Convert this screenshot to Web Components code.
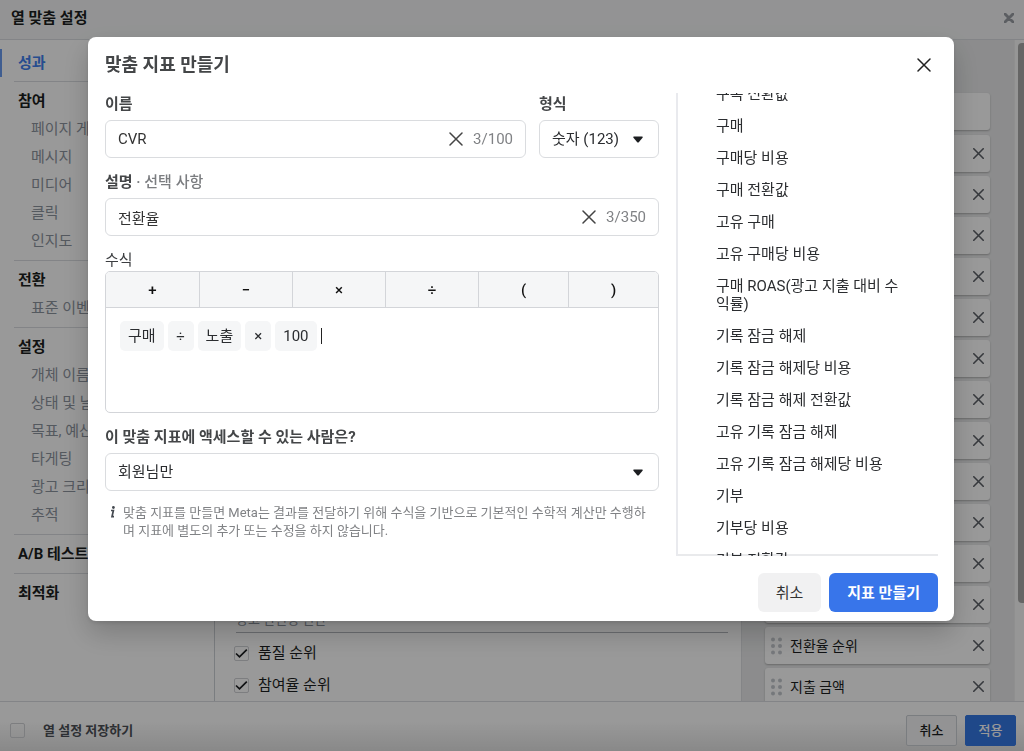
<!DOCTYPE html>
<html lang="ko">
<head>
<meta charset="utf-8">
<meta name="viewport" content="width=device-width, initial-scale=1">
<title>열 맞춤 설정</title>
<style>
  html, body { height: 100%; margin: 0; }
  body { font: 15px/22px Roboto, "Noto Sans CJK KR", sans-serif; color: #1c1e21; background: #fff; overflow: hidden; }
</style>
</head>
<body>
<column-page></column-page>
<modal-layer><metric-dialog></metric-dialog></modal-layer>

<script>
const BASE = `<style>
  *, *::before, *::after { box-sizing: border-box; }
  button, input, select { font: inherit; color: inherit; margin: 0; padding: 0; border: 0; background: none; border-radius: 0; outline: 0; }
  ul { list-style: none; margin: 0; padding: 0; }
  :host { box-sizing: border-box; display: block; }
</style>`;

function define(tag, markup, ready) {
  const template = document.createElement("template");
  customElements.define(tag, class extends HTMLElement {
    connectedCallback() {
      if (this.shadowRoot) return;
      template.innerHTML = BASE + (typeof markup === "function" ? markup(this) : markup);
      this.attachShadow({ mode: "open" }).append(template.content.cloneNode(true));
      if (ready) ready(this, this.shadowRoot);
    }
  });
}

/* Cross icon: size and stroke are set with attributes */
define("cross-icon", el => {
  const size = el.getAttribute("size") || 14, w = el.getAttribute("stroke") || 1.5;
  return `<style>:host { display: inline-block; } svg { display: block; }</style>
  <svg width="${size}" height="${size}" viewBox="0 0 14 14" aria-hidden="true"><path d="M1 1 13 13M13 1 1 13" fill="none" stroke="currentColor" stroke-width="${w}" stroke-linecap="round"/></svg>`;
});

define("check-field", el => `<style>
  label { display: flex; align-items: center; gap: var(--gap, 9px); }
  .box { display: grid; flex: none; width: 15px; height: 15px; }
  .box > * { grid-area: 1 / 1; }
  input { appearance: none; width: 15px; height: 15px; border: 1px solid #d0d2d6; border-radius: 2px; }
  svg { display: none; pointer-events: none; }
  input:checked + svg { display: block; }
</style>
<label><span class="box"><input type="checkbox" ${el.hasAttribute("checked") ? "checked" : ""}>
<svg width="15" height="15" viewBox="0 0 15 15"><path d="M2 7.5 5.5 10.8 12.8 3.6" fill="none" stroke="#1c1e21" stroke-width="1.7"/></svg></span>
<span><slot></slot></span></label>`);

define("nav-section", `<style>
  :host { margin-left: 14px; padding: 5px 0 5px 4px; border-top: 1px solid #dadde1; line-height: 28px; white-space: nowrap; }
  h3 { margin: 0; font-size: 15px; font-weight: 700; }
  ul { padding-left: 13px; color: #8d949e; }
</style><h3><slot name="title"></slot></h3><ul><slot></slot></ul>`);

define("side-nav", `<style>
  :host { width: 215px; flex: none; border-right: 1px solid #ccd0d5; overflow: hidden; }
  .active { display: block; margin: 9px 0 4px; padding-left: 16px; border-left: 2px solid #6a9bf0; line-height: 28px; font-weight: 700; color: #4080ee; text-decoration: none; }
  li { list-style: none; }
</style>
<nav><a class="active" href="#performance">성과</a>
<nav-section><span slot="title">참여</span><li>페이지 게시물</li><li>메시지</li><li>미디어</li><li>클릭</li><li>인지도</li></nav-section>
<nav-section><span slot="title">전환</span><li>표준 이벤트</li></nav-section>
<nav-section><span slot="title">설정</span><li>개체 이름 및 ID</li><li>상태 및 날짜</li><li>목표, 예산 및 일정</li><li>타게팅</li><li>광고 크리에이티브</li><li>추적</li></nav-section>
<nav-section><span slot="title">A/B 테스트</span></nav-section>
<nav-section><span slot="title">최적화</span></nav-section></nav>`);

define("metric-options", `<style>
  :host { flex: 1; display: flex; flex-direction: column; justify-content: flex-end; padding: 0 13px 0 19px; overflow: hidden; }
  h4 { margin: 0 0 4px 2px; padding-bottom: 1px; border-bottom: 1px solid #b4b7bc; font: inherit; font-size: 13px; color: #8d949e; }
  check-field { line-height: 32px; }
</style><h4>광고 관련성 진단</h4><check-field checked>품질 순위</check-field><check-field checked>참여율 순위</check-field>`);

define("column-card", el => `<style>
  :host { display: flex; align-items: center; gap: 8px; flex: none; height: 37px; padding: 0 6px; border-radius: 3px; background: #fff; box-shadow: 0 1px 2px rgba(0,0,0,.25); font-size: 14px; color: #1c1e21; }
  .grip { display: block; fill: #c4c8ce; }
  span { flex: 1; }
  button { width: 11px; height: 11px; color: #5b5f66; }
  cross-icon { display: block; }
</style>
${el.hasAttribute("pinned") ? "" : `<svg class="grip" width="11" height="18" viewBox="0 0 11 18"><circle cx="2" cy="2.5" r="2"/><circle cx="9" cy="2.5" r="2"/><circle cx="2" cy="9" r="2"/><circle cx="9" cy="9" r="2"/><circle cx="2" cy="15.5" r="2"/><circle cx="9" cy="15.5" r="2"/></svg>`}
<span><slot></slot></span>
${el.hasAttribute("pinned") ? "" : `<button type="button" aria-label="삭제"><cross-icon size="11" stroke="2"></cross-icon></button>`}`);

define("column-list", `<style>
  :host { display: flex; width: 283px; flex: none; background: #e9eaeb; border-left: 1px solid #dcdee1; overflow: hidden; }
  .cards { flex: 1; display: flex; flex-direction: column; gap: 4px; padding: 53px 24px 0 23px; overflow: hidden; }
  [pinned] { margin-bottom: 1px; }
  .track { width: 10px; padding: 3px 0 0 3px; background: #fafafa; border-left: 1px solid #eee; }
  .thumb { height: 560px; border-radius: 4px 0 0 4px; background: #a9a9a9; }
</style>
<div class="cards"><column-card pinned></column-card>${"<column-card></column-card>".repeat(12)}<column-card>전환율 순위</column-card><column-card>지출 금액</column-card></div>
<div class="track"><div class="thumb"></div></div>`);

define("column-page", `<style>
  :host { height: 100vh; display: flex; flex-direction: column; }
  header { flex: none; display: flex; align-items: center; justify-content: space-between; height: 40px; padding: 0 10px 3px 11px; background: #f5f6f7; border-bottom: 1px solid #dadde1; }
  h1 { margin: 0; font-size: 15px; font-weight: 700; }
  header button { width: 10px; height: 10px; color: #999da4; }
  header cross-icon { display: block; }
  main { flex: 1; min-height: 0; display: flex; }
  footer { flex: none; display: flex; align-items: center; gap: 8px; height: 50px; padding: 8px 8px 0 10px; border-top: 1px solid #dadde1; background: linear-gradient(#fff 40%, #e4e4e4); font-size: 13px; }
  footer check-field { --gap: 18px; flex: 1; font-weight: 700; color: #4b4f56; }
  footer button { width: 51px; height: 31px; border-radius: 2px; border: 1px solid #ccd0d5; background: #f5f6f7; font-weight: 500; }
  footer .primary { border-color: #3578e5; background: #3578e5; color: #fff; }
</style>
<header><h1>열 맞춤 설정</h1><button type="button" aria-label="닫기"><cross-icon size="10" stroke="4"></cross-icon></button></header>
<main><side-nav></side-nav><metric-options></metric-options><column-list></column-list></main>
<footer><check-field>열 설정 저장하기</check-field><button type="button">취소</button><button type="button" class="primary">적용</button></footer>`);

define("modal-layer", `<style>
  :host { position: fixed; inset: 0; padding: 37px 70px 0 88px; background: rgba(0,0,0,.4); }
</style><slot></slot>`);

define("text-field", el => `<style>
  label { display: block; margin-bottom: 5px; font-weight: 700; color: #444648; }
  small { font-size: 15px; font-weight: 500; color: #7b7d80; }
  .field { display: flex; align-items: center; height: 38px; padding: 0 12px; border: 1px solid #dadcdf; border-radius: 6px; }
  input { flex: 1; min-width: 0; height: 36px; color: #333; }
  button { width: 14px; height: 14px; margin-right: 10px; color: #444; }
  cross-icon { display: block; }
  output { color: #808285; }
</style>
<label for="f">${el.getAttribute("label")}${el.hasAttribute("optional") ? "<small> · 선택 사항</small>" : ""}</label>
<div class="field"><input id="f" type="text" value="${el.getAttribute("value")}"><button type="button" aria-label="지우기"><cross-icon></cross-icon></button><output for="f">3/${el.getAttribute("max")}</output></div>`);

define("select-field", el => `<style>
  label { display: block; margin-bottom: 5px; font-weight: 700; color: #444648; }
  .field { display: grid; align-items: center; }
  .field > * { grid-area: 1 / 1; }
  select { appearance: none; width: 100%; height: 38px; padding: 0 12px; border: 1px solid #dadcdf; border-radius: 6px; color: #2b2d30; }
  svg { justify-self: end; margin-right: 16px; pointer-events: none; }
</style>
<label for="s">${el.getAttribute("label")}</label>
<div class="field"><select id="s"><option>${el.getAttribute("value")}</option></select>
<svg width="10" height="7" viewBox="0 0 10 7"><path d="M1 .5H9Q10.3.7 9.5 1.8L6 6Q5 7 4 6L.5 1.8Q-.3.7 1 .5Z" fill="#1c1e21"/></svg></div>`);

define("formula-token", `<style>
  :host { min-width: 26px; height: 30px; padding: 0 8px; border-radius: 5px; background: #f5f6f7; line-height: 30px; text-align: center; color: #2b2d30; }
</style><slot></slot>`);

define("formula-editor", `<style>
  .label { color: #3c3e41; }
  .frame { height: 142px; border: 1px solid #d3d5d9; border-radius: 5px; overflow: hidden; }
  .ops { display: grid; grid-template-columns: repeat(4, 93fr) 90fr 90fr; height: 36px; background: #f5f6f7; border-bottom: 1px solid #d3d5d9; }
  .ops button { font-size: 15px; font-weight: 500; color: #111; }
  .ops button + button { border-left: 1px solid #d3d5d9; }
  .input { display: flex; flex-wrap: wrap; align-items: center; gap: 4px; padding: 13px 14px; }
  .caret { width: 1px; height: 16px; background: #222; }
</style>
<div class="label" id="l">수식</div>
<div class="frame"><div class="ops" role="toolbar"><button type="button">+</button><button type="button">−</button><button type="button">×</button><button type="button">÷</button><button type="button">(</button><button type="button">)</button></div>
<div class="input" role="textbox" aria-labelledby="l"><formula-token>구매</formula-token><formula-token>÷</formula-token><formula-token>노출</formula-token><formula-token>×</formula-token><formula-token>100</formula-token><span class="caret"></span></div></div>`);

define("metric-picker", `<style>
  :host { height: 463px; padding: 0 36px 0 38px; border-left: 2px solid #e9eaee; box-shadow: inset 0 -2px #e9eaec; overflow: hidden; }
  li { margin-bottom: 14px; }
  button { display: block; text-align: left; line-height: 18px; word-break: break-all; color: #2b2d30; }
</style><ul></ul>`, (host, root) => {
  const names = ["구독 전환값", "구매", "구매당 비용", "구매 전환값", "고유 구매", "고유 구매당 비용", "구매 ROAS(광고 지출 대비 수익률)", "기록 잠금 해제", "기록 잠금 해제당 비용", "기록 잠금 해제 전환값", "고유 기록 잠금 해제", "고유 기록 잠금 해제당 비용", "기부", "기부당 비용", "기부 전환값", "고유 기부"];
  root.querySelector("ul").innerHTML = names.map(n => `<li><button type="button">${n}</button></li>`).join("");
  host.scrollTop = 8;
});

define("metric-dialog", `<style>
  :host { padding: 0 16px 9px 17px; border-radius: 8px; background: #fff; box-shadow: 0 12px 28px rgba(0,0,0,.2), 0 2px 4px rgba(0,0,0,.1); }
  header { display: flex; align-items: center; justify-content: space-between; height: 56px; padding-right: 7px; }
  h2 { margin: 0; font-size: 18px; font-weight: 700; color: #444648; }
  header button { width: 14px; height: 14px; color: #222; }
  header cross-icon { display: block; }
  .columns { display: grid; grid-template-columns: minmax(0, 1fr) 262px; gap: 17px; }
  form { display: flex; flex-direction: column; gap: 13px; }
  .row { display: grid; grid-template-columns: minmax(0, 1fr) 120px; gap: 13px; }
  .help { display: flex; gap: 8px; margin: 0; padding: 0 3px 0 5px; font-size: 13px; line-height: 18px; color: #808285; }
  .help svg { flex: none; margin-top: 2px; }
  footer { display: flex; justify-content: flex-end; gap: 8px; padding-top: 17px; }
  footer button { height: 39px; padding: 0 18px; border-radius: 6px; background: #f1f1f2; color: #333; }
  footer .primary { background: #3875ea; color: #fff; font-weight: 700; }
</style>
<header><h2>맞춤 지표 만들기</h2><button type="button" aria-label="닫기"><cross-icon></cross-icon></button></header>
<div class="columns"><form>
<div class="row"><text-field label="이름" value="CVR" max="100"></text-field><select-field label="형식" value="숫자 (123)"></select-field></div>
<text-field label="설명" optional value="전환율" max="350"></text-field>
<formula-editor></formula-editor>
<select-field label="이 맞춤 지표에 액세스할 수 있는 사람은?" value="회원님만"></select-field>
<p class="help"><svg width="5" height="12" viewBox="0 0 5 12"><circle cx="3.4" cy="1.5" r="1.4" fill="#444950"/><path d="M1 4.5H3.4L2 10.6H4" fill="none" stroke="#444950" stroke-width="1.7"/></svg><span>맞춤 지표를 만들면 Meta는 결과를 전달하기 위해 수식을 기반으로 기본적인 수학적 계산만 수행하며 지표에 별도의 추가 또는 수정을 하지 않습니다.</span></p>
</form><metric-picker></metric-picker></div>
<footer><button type="button">취소</button><button type="button" class="primary">지표 만들기</button></footer>`);
</script>
</body>
</html>
